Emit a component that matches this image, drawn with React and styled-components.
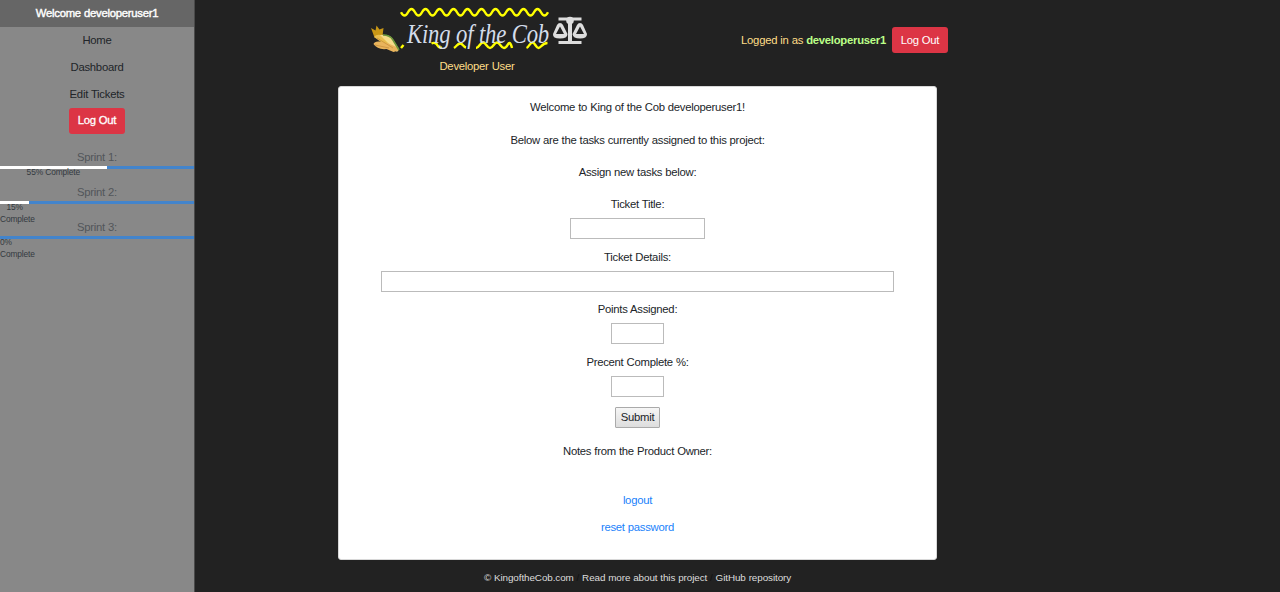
import React from 'react';
import styled, { createGlobalStyle } from 'styled-components';

const Global = createGlobalStyle`
  * { box-sizing: border-box; }
  html, body { margin: 0; height: 100%; overflow: hidden; }
  body {
    background: #222;
    color: #212529;
    font-family: "Liberation Sans", Arial, sans-serif;
    font-size: 11.3px;
    letter-spacing: -0.26px;
    word-spacing: 0.2px;
    line-height: 16.14px;
  }
`;

const Page = styled.div`
  display: flex;
  height: 592px;
`;

const Sidebar = styled.aside`
  flex: 0 0 195px;
  width: 195px;
  border-right: 1px solid #4a4a4a;
  background: #888;
  text-align: center;
`;

const SideTitle = styled.div`
  height: 27px;
  line-height: 26px;
  background: #666;
  color: #fff;
  -webkit-text-stroke: 0.4px #fff;
`;

const SideLink = styled.a`
  display: block;
  height: 27px;
  line-height: 27px;
`;

const LogoutButton = styled.button`
  display: inline-block;
  width: 56px;
  height: 26px;
  padding: ${(p) => (p.$strong ? '0 0 1px' : '0')};
  border: 0;
  border-radius: 3px;
  background: #dc3545;
  color: #fff;
  font: inherit;
  letter-spacing: inherit;
  -webkit-text-stroke: ${(p) => (p.$strong ? '0.3px #fff' : '0')};
`;

const SprintList = styled.div`
  margin-top: 15px;
`;

const Sprint = styled.div`
  height: 35px;
`;

const SprintName = styled.div`
  height: 17px;
  line-height: 17px;
  color: #52565a;
`;

const Track = styled.div`
  height: 3px;
  background: #4384cb;
`;

const Fill = styled.div`
  width: ${(p) => p.$value}%;
  height: 3px;
  background: #fff;
`;

const FillLabel = styled.div`
  width: ${(p) => p.$value}%;
  margin-top: -3px;
  font-size: 8.4px;
  letter-spacing: -0.14px;
  line-height: 12px;
  color: #343a40;
`;

const Main = styled.main`
  width: 599px;
  margin-left: 143px;
`;

const Header = styled.header`
  display: flex;
  justify-content: space-between;
  width: 610px;
  height: 86px;
`;

const Brand = styled.div`
  width: 278px;
  text-align: center;
  color: #fd8;
`;

const LogoArt = styled.svg`
  display: block;
  width: 230px;
  height: 58px;
  margin-left: 27px;
`;

const Account = styled.div`
  display: flex;
  align-items: center;
  gap: 6px;
  height: 26px;
  margin-top: 27px;
  color: #fd8;
  white-space: nowrap;
`;

const UserName = styled.b`
  color: #bf8;
`;

const Card = styled.section`
  display: flex;
  flex-direction: column;
  align-items: center;
  height: 474px;
  padding-top: 12px;
  border: 1px solid #d8d8d8;
  border-radius: 3px;
  background: #fff;
`;

const Line = styled.p`
  height: 16px;
  line-height: 16px;
  margin: 0 0 ${(p) => p.$gap}px;
`;

const Field = styled.label`
  display: flex;
  flex-direction: column;
  align-items: center;
  gap: 6px;
  height: 52.6px;
  line-height: 16px;
`;

const Input = styled.input`
  width: ${(p) => p.$w}px;
  height: 21px;
  padding: 0 2px;
  border: 1px solid #bbb;
  background: #fff;
  font: inherit;
`;

const Submit = styled.button`
  width: 45px;
  height: 21px;
  margin: 0.8px 0 14.7px;
  padding: 0 0 1px;
  border: 1px solid #aaa;
  border-radius: 1px;
  background: linear-gradient(#f6f6f6, #ddd);
  color: inherit;
  font: inherit;
  letter-spacing: inherit;
`;

const CardLink = styled.a`
  height: 27px;
  line-height: 16px;
  color: #1a82fb;
`;

const Footer = styled.footer`
  margin-top: 10px;
  text-align: center;
  font-size: 9.9px;
  letter-spacing: -0.09px;
  color: #111;
  a { color: #ddd; }
`;

const wave = (x, y, n) =>
  `M${x} ${y}` +
  Array.from({ length: n }, (_, i) => ` q3.5 ${i % 2 ? -6.5 : 6.5} 7 0`).join('');

function Logo() {
  return (
    <LogoArt viewBox="365 0 230 58">
      <g fill="none" stroke="#ff0" strokeWidth="2.4">
        <path d={wave(401, 12.2, 21)} />
        <path d="M401 48l2.500-3" />
        <path d="M431.500 43.500c3-1.500 5 0 6 2s2.500 2.500 4.500 2" />
        <path d="M454 48c3-2 4-5 6.500-4.500s3 3.500 5.500 4" />
        <path d="M476 48c3 0 4-5.500 7-5.500s4 5.500 7 5.500 4-5.500 7-5.500 4 5.500 7 5.500 4-5.500 5.500-5 2 3 2.500 5" />
        <path d="M526.500 48c2.500-1 3.500-5.500 6-5.500s3.500 5.500 6 5.500 3.500-5 9-5" />
      </g>
      <path d="M371 28l4.500 2.500 1-5 3 4 4-1.500-1 8-8 1.500z" fill="#c99716" />
      <path d="M374 37q2-3 7-2 4 1 8 4l8 8-3 4-9-6z" fill="#e8bd4d" />
      <path d="M380 35q8-1 12 3l7 11-2 3-8-8z" fill="#f6dc8a" />
      <path d="M373.500 44q1-3 6-2.500l9 2 9 4 1 3-5 1.500-7-3q-9 1-13-5z" fill="#e9b45c" />
      <path d="M383 35q7 0 10 5l6 10" stroke="#6b963b" strokeWidth="1.600" fill="none" />
      <path d="M377 38l16 10M375 45l14 3" stroke="#c98f3b" strokeWidth=".8" fill="none" />
      <text
        x="407"
        y="43"
        fontFamily="'Liberation Serif', serif"
        fontStyle="italic"
        fontSize="28"
        fill="#d3dcea"
        textLength="142"
        lengthAdjust="spacingAndGlyphs"
      >
        King of the Cob
      </text>
      <g fill="#ddd">
        <path d="M558.500 17.500h23v3h-9.500v20.500h9.500v3h-23v-3h9.500V20.500h-9.500z" />
        <circle cx="570" cy="20.500" r="3.800" />
        <path fillRule="evenodd" d="M560 23q2 0 3 2l4.500 9q0 4.500-7.500 4.500t-7-4.500l4-9q1-2 3-2zm0 3.500-4 7.500h8zM580 23q2 0 3 2l4 9q0 4.500-7 4.500t-7.500-4.500l4.500-9q1-2 3-2zm0 3.500-4 7.500h8z" />
      </g>
    </LogoArt>
  );
}

const sprints = [55, 15, 0];

export default function App() {
  return (
    <>
      <Global />
      <Page>
        <Sidebar>
          <SideTitle>Welcome developeruser1</SideTitle>
          <SideLink>Home</SideLink>
          <SideLink>Dashboard</SideLink>
          <SideLink>Edit Tickets</SideLink>
          <LogoutButton $strong>Log Out</LogoutButton>
          <SprintList>
            {sprints.map((value, i) => (
              <Sprint key={i}>
                <SprintName>{`Sprint ${i + 1}:`}</SprintName>
                <Track><Fill $value={value} /></Track>
                <FillLabel $value={value}>{`${value}% Complete`}</FillLabel>
              </Sprint>
            ))}
          </SprintList>
        </Sidebar>
        <Main>
          <Header>
            <Brand>
              <Logo />
              Developer User
            </Brand>
            <Account>
              <span>Logged in as <UserName>developeruser1</UserName></span>
              <LogoutButton>Log Out</LogoutButton>
            </Account>
          </Header>
          <Card>
            <Line $gap={16.5}>Welcome to King of the Cob developeruser1!</Line>
            <Line $gap={16.3}>Below are the tasks currently assigned to this project:</Line>
            <Line $gap={16.3}>Assign new tasks below:</Line>
            <Field>Ticket Title:<Input $w={135} /></Field>
            <Field>Ticket Details:<Input $w={513} /></Field>
            <Field>Points Assigned:<Input $w={53} /></Field>
            <Field>Precent Complete %:<Input $w={53} /></Field>
            <Submit>Submit</Submit>
            <Line $gap={33}>Notes from the Product Owner:</Line>
            <CardLink>logout</CardLink>
            <CardLink>reset password</CardLink>
          </Card>
          <Footer>
            <a>© KingoftheCob.com</a> / <a>Read more about this project</a> / <a>GitHub repository</a>
          </Footer>
        </Main>
      </Page>
    </>
  );
}
